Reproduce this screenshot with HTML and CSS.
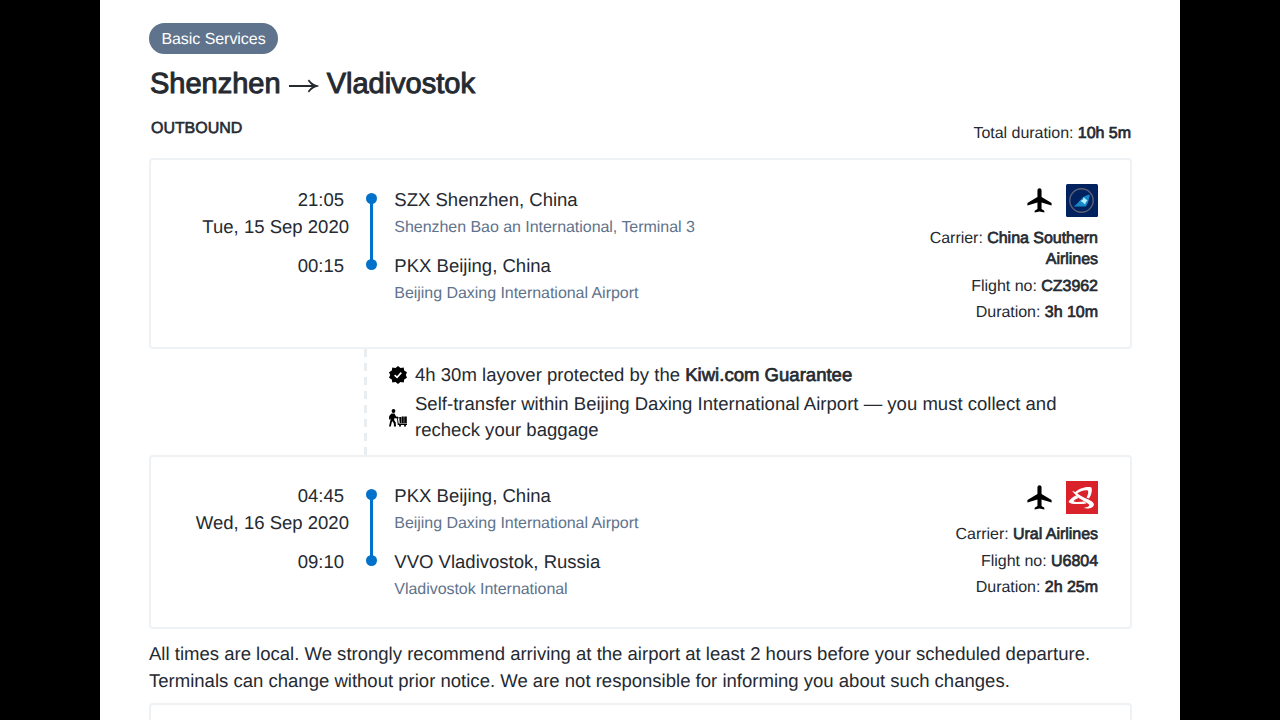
FILE: index.html
```html
<!DOCTYPE html>
<html lang="en">
<head>
    <meta charset="UTF-8">
    <meta name="viewport" content="width=device-width, initial-scale=1.0">
    <title>Shenzhen → Vladivostok</title>
    <link rel="stylesheet" href="styles.css">
</head>
<body>

    <main class="page">
        <!-- Title -->
        <span class="badge">Basic Services</span>
        <h1>Shenzhen <svg class="arrow" viewBox="0 0 30 18"><path d="M0 9H27"/><path class="arrow-head" d="M20 2.500C22.500 5.500 25.500 8 29.500 8.500V9.500C25.500 10 22.500 12.500 20 15.500L18.800 14.300C20.500 12 22 10.500 24 9C22 7.500 20.500 6 18.800 3.700Z"/></svg> Vladivostok</h1>
        <div class="summary">
            <h2>OUTBOUND</h2>
            <p class="total">Total duration: <b>10h 5m</b></p>
        </div>

        <!-- First flight -->
        <section class="card card-first">
            <div class="times">
                <p class="time">21:05</p>
                <p>Tue, 15 Sep 2020</p>
                <p class="time arrive">00:15</p>
            </div>
            <div class="line"></div>
            <div class="stops">
                <p>SZX Shenzhen, China</p>
                <p class="airport">Shenzhen Bao an International, Terminal 3</p>
                <p class="arrive">PKX Beijing, China</p>
                <p class="airport">Beijing Daxing International Airport</p>
            </div>
            <div class="carrier">
                <div class="icons">
                    <svg class="plane" viewBox="0 0 24 24"><path d="M10.300 9V3.500a1.700 1.700 0 0 1 3.400 0V9L22 14v2.200l-8.300-2.500V19l2.300 1.500V22L12 21.200 8 22v-1.500l2.300-1.500v-5.300L2 16.200V14z"/></svg>
                    <svg class="logo" viewBox="0 0 32 33">
                        <rect width="32" height="33" rx="1.500" fill="#01215f"/>
                        <circle cx="15.500" cy="16.500" r="11.700" fill="none" stroke="#5c6075" stroke-width="1.400"/>
                        <path d="M7.500 22.500C13 20 15 11.500 24 10.500C22.500 15 23 19 19.500 22.500Z" fill="#1689c9"/>
                        <path d="M17.500 13l2 2 2 1.500-1.500 1.500-1 2.500-2-2-2.500-1.500 2.500-1.500z" fill="#b5efff"/>
                    </svg>
                </div>
                <p>Carrier: <b>China Southern Airlines</b></p>
                <p>Flight no: <b>CZ3962</b></p>
                <p>Duration: <b>3h 10m</b></p>
            </div>
        </section>

        <!-- Layover -->
        <section class="layover">
            <svg class="dashes" viewBox="0 0 3 106"><path d="M1.500 0V106"/></svg>
            <div class="notes">
                <div class="note">
                    <svg class="note-icon" viewBox="0 0 18 18">
                        <path d="M9 0l2.500 2 3.200-.5.500 3L18 6.300 16.800 9l1.200 2.800-2.800 1.700-.5 3-3.200-.5L9 18l-2.500-2-3.200.5-.5-3L0 11.800 1.200 9 0 6.300l2.800-1.800.5-3 3.200.5z"/>
                        <path class="tick" d="M5.600 9.100l2.500 2.300 4.200-4.800"/>
                    </svg>
                    <p>4h 30m layover protected by the <b>Kiwi.com Guarantee</b></p>
                </div>
                <div class="note">
                    <svg class="note-icon luggage" viewBox="0 0 18 18">
                        <circle cx="4.500" cy="2" r="1.900"/>
                        <path d="M2.500 4.500h3L7 7.500l2.500.5v1.600L6 9.300l-.4-.6-.5 2.300 1.600 2.500.3 4H5l-.2-3.300-1.700-2.200L1.800 17.500H0L1.700 10l-.5-.5v1H0l.2-3.500z"/>
                        <path d="M8.500 7.500l1.200 7H18v1.500H8.800L7.800 8zM10.200 8h2v6h-1.500zM12.600 7.500h2.200V14h-2.200zM15.200 7.500h2.600V14h-2.600z"/>
                        <circle cx="11" cy="16.800" r="1"/>
                        <circle cx="16" cy="16.800" r="1"/>
                    </svg>
                    <p>Self-transfer within Beijing Daxing International Airport — you must collect and recheck your baggage</p>
                </div>
            </div>
        </section>

        <!-- Second flight -->
        <section class="card card-second">
            <div class="times">
                <p class="time">04:45</p>
                <p>Wed, 16 Sep 2020</p>
                <p class="time arrive">09:10</p>
            </div>
            <div class="line"></div>
            <div class="stops">
                <p>PKX Beijing, China</p>
                <p class="airport">Beijing Daxing International Airport</p>
                <p class="arrive">VVO Vladivostok, Russia</p>
                <p class="airport">Vladivostok International</p>
            </div>
            <div class="carrier">
                <div class="icons">
                    <svg class="plane" viewBox="0 0 24 24"><path d="M10.300 9V3.500a1.700 1.700 0 0 1 3.400 0V9L22 14v2.200l-8.300-2.500V19l2.300 1.500V22L12 21.200 8 22v-1.500l2.300-1.500v-5.300L2 16.200V14z"/></svg>
                    <svg class="logo" viewBox="0 0 32 33">
                        <rect width="32" height="33" fill="#d9222a"/>
                        <g fill="#fff">
                            <path d="M6 10C9 10 12 13.500 17 16C22 18.500 27.500 20 28 23.500C27.500 27.500 22 28 17.500 27C21 26 24 25.500 23 23.500C20 20.500 14 18.500 10.500 15C8.500 12.500 7 11 6 10Z"/>
                            <path d="M9 11.500C13 7.500 20 5 25.500 6.500C26.500 9.500 25.500 14 23 17.500L20.500 16.500C22 14 23 11 21.500 9.300C18 8.800 13.500 10.500 10.500 13Z"/>
                            <path d="M10 14.500C6.500 16 3.500 18.500 2.500 21C4.500 23.500 13 23.500 20.500 22.500L18.500 20.500C14 21 9 21.300 7.500 20.300C8.500 18.500 11 17.500 12.500 17Z"/>
                        </g>
                    </svg>
                </div>
                <p>Carrier: <b>Ural Airlines</b></p>
                <p>Flight no: <b>U6804</b></p>
                <p>Duration: <b>2h 25m</b></p>
            </div>
        </section>

        <p class="info">All times are local. We strongly recommend arriving at the airport at least 2 hours before your scheduled departure. Terminals can change without prior notice. We are not responsible for informing you about such changes.</p>

        <section class="card card-next"></section>
    </main>

</body>
</html>
```
FILE: styles.css
```css
/* General Styles */
* { margin: 0; padding: 0; box-sizing: border-box; }
body { height: 720px; overflow: hidden; background: #000; color: #252a31;
    font-family: "Liberation Sans", Arial, sans-serif; font-size: 18.55px; line-height: 26.6px;
    text-rendering: geometricPrecision; }
svg { display: block; flex: none; }
b { font-weight: 400; -webkit-text-stroke: 0.7px #252a31; }

.page { width: 1080px; height: 720px; margin: 0 auto; padding: 23px 48px 0 49px;
    background: #fff; overflow: hidden; }

/* Title */
.badge { display: block; width: 129px; height: 31px; border-radius: 16px; background: #5f738c;
    color: #fff; font-size: 16px; letter-spacing: -0.05px; line-height: 33px; text-align: center; }
h1 { display: flex; align-items: center; gap: 8px; height: 37px; margin-top: 12px; padding-left: 1px;
    font-size: 29px; font-weight: 400; -webkit-text-stroke: 1px #252a31; }
.arrow { width: 30px; height: 18px; margin-top: 3px; fill: none; stroke: #252a31; stroke-width: 2; }
.arrow .arrow-head { fill: #252a31; stroke: none; }
.summary { display: flex; justify-content: space-between; height: 55px; padding: 15px 1px 0 2px; }
h2 { font-size: 16px; letter-spacing: -0.05px; font-weight: 400; line-height: 21px; -webkit-text-stroke: 0.6px #252a31; }
.total { margin-top: 5px; font-size: 16px; letter-spacing: -0.04px; line-height: 21px; }

/* Flight cards */
.card { display: flex; border: 2px solid #eff2f5; border-radius: 4px; }
.card-first { height: 191px; padding: 27px 32px 0 0; }
.card-second { height: 174px; padding: 26px 32px 0 0; }
.card-next { height: 60px; }
.times { width: 198px; text-align: right; }
.time { padding-right: 5px; }
.arrive { margin-top: 13px; }
.line { position: relative; width: 3px; height: 66px; margin: 11px 0 0 21px; background: #0172cb; }
.line::before, .line::after { content: ""; position: absolute; left: -4px; width: 11px; height: 11px;
    border-radius: 50%; background: #0172cb; }
.line::before { top: -5.5px; }
.line::after { bottom: -5.5px; }
.stops { flex: 1; padding-left: 21.3px; }
.stops .airport { padding-top: 1.3px; color: #5f738c; font-size: 16px; letter-spacing: -0.04px; }
.stops .arrive { margin-top: 11.7px; }
.carrier { width: 190px; margin-top: -3px; font-size: 16px; letter-spacing: -0.03px;
    line-height: 21.33px; text-align: right; }
.card-second .carrier { margin-top: -2px; }
.carrier p { margin-bottom: 5.2px; }
.icons { display: flex; justify-content: flex-end; align-items: center; gap: 12px; margin-bottom: 10.8px; }
.plane { width: 29px; height: 29px; fill: #000; }
.logo { width: 32px; height: 33px; }
.card-second .icons { margin-top: -0.5px; }

/* Layover */
.layover { display: flex; height: 106px; }
.dashes { width: 3px; height: 106px; margin-left: 214.5px; fill: none; stroke: #e8edf1;
    stroke-width: 3; stroke-dasharray: 8 6; }
.notes { margin-left: 22px; padding-top: 13px; width: 700px; }
.note { display: flex; align-items: center; gap: 8.5px; margin-bottom: 2px; letter-spacing: 0.01px; }
.note-icon { width: 18px; height: 18px; fill: #000; }
.luggage { margin-top: 2px; }
.tick { fill: none; stroke: #fff; stroke-width: 1.6; }

.info { padding: 12.2px 0 9.2px; line-height: 26.4px; }
```
